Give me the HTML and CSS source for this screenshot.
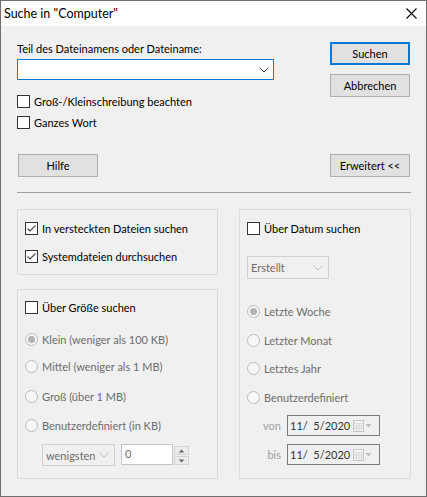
FILE: index.html
```html
<!DOCTYPE html>
<html lang="de">
<head>
<meta charset="utf-8">
<title>Suche in "Computer"</title>
<link rel="stylesheet" href="styles.css">
</head>
<body>
<div class="window">
  <div class="titlebar">
    <span class="title">Suche in &quot;Computer&quot;</span>
    <svg class="close" width="11" height="11" viewBox="0 0 11 11"><path d="M0.5 0.5 L10.5 10.5 M10.5 0.5 L0.5 10.5" stroke="#000" stroke-width="1.1" fill="none"/></svg>
  </div>
  <div class="content">
    <div class="top">
      <div class="top-left">
        <div class="label">Teil des Dateinamens oder Dateiname:</div>
        <div class="combo">
          <svg class="chev" width="10" height="6" viewBox="0 0 10 6"><path d="M0.5 0.5 L5 5 L9.5 0.5" stroke="#3c3c3c" stroke-width="1" fill="none"/></svg>
        </div>
        <div class="row check-row first"><span class="box"></span><span>Groß-/Kleinschreibung beachten</span></div>
        <div class="row check-row second"><span class="box"></span><span>Ganzes Wort</span></div>
      </div>
      <div class="top-right">
        <div class="btn btn-default">Suchen</div>
        <div class="btn btn-cancel">Abbrechen</div>
      </div>
    </div>
    <div class="btn-row">
      <div class="btn btn-help">Hilfe</div>
      <div class="btn">Erweitert &lt;&lt;</div>
    </div>
    <div class="sep"></div>
    <div class="groups">
      <div class="col-left">
        <div class="group g-attr">
          <div class="row"><span class="box checked"><svg width="11" height="11" viewBox="0 0 11 11"><path d="M1.5 5.5 L4 8 L9.5 2.5" stroke="#444" stroke-width="1.1" fill="none"/></svg></span><span>In versteckten Dateien suchen</span></div>
          <div class="row r2"><span class="box checked"><svg width="11" height="11" viewBox="0 0 11 11"><path d="M1.5 5.5 L4 8 L9.5 2.5" stroke="#444" stroke-width="1.1" fill="none"/></svg></span><span>Systemdateien durchsuchen</span></div>
        </div>
        <div class="group g-size">
          <div class="row"><span class="box"></span><span>Über Größe suchen</span></div>
          <div class="row radio-row s1"><span class="radio on"></span><span>Klein (weniger als 100 KB)</span></div>
          <div class="row radio-row s2"><span class="radio"></span><span>Mittel (weniger als 1 MB)</span></div>
          <div class="row radio-row s3"><span class="radio"></span><span>Groß (über 1 MB)</span></div>
          <div class="row radio-row s4"><span class="radio"></span><span>Benutzerdefiniert (in KB)</span></div>
          <div class="size-inputs">
            <div class="dd dd-min"><span>wenigsten</span><svg class="chev" width="10" height="6" viewBox="0 0 10 6"><path d="M0.5 0.5 L5 5 L9.5 0.5" stroke="#c2c2c2" stroke-width="1" fill="none"/></svg></div>
            <div class="num">0</div>
            <div class="spin">
              <div class="spin-btn"><svg width="7" height="4" viewBox="0 0 7 4"><path d="M0.5 3.5 L3.5 0.5 L6.5 3.5 Z" fill="#6a6a6a"/></svg></div>
              <div class="spin-btn"><svg width="7" height="4" viewBox="0 0 7 4"><path d="M0.5 0.5 L3.5 3.5 L6.5 0.5 Z" fill="#6a6a6a"/></svg></div>
            </div>
          </div>
        </div>
      </div>
      <div class="group g-date">
        <div class="row"><span class="box"></span><span>Über Datum suchen</span></div>
        <div class="dd dd-created"><span>Erstellt</span><svg class="chev" width="10" height="6" viewBox="0 0 10 6"><path d="M0.5 0.5 L5 5 L9.5 0.5" stroke="#c2c2c2" stroke-width="1" fill="none"/></svg></div>
        <div class="row radio-row d1"><span class="radio on"></span><span>Letzte Woche</span></div>
        <div class="row radio-row d2"><span class="radio"></span><span>Letzter Monat</span></div>
        <div class="row radio-row d3"><span class="radio"></span><span>Letztes Jahr</span></div>
        <div class="row radio-row d4"><span class="radio"></span><span>Benutzerdefiniert</span></div>
        <div class="date-row von">
          <span class="date-label">von</span>
          <div class="date"><span class="date-text">11/&nbsp; 5/2020</span>
            <svg class="cal" width="19" height="12" viewBox="0 0 19 12"><rect x="0.5" y="0.5" width="10" height="11" fill="#f4f4f4" stroke="#c6c6c6"/><path d="M1 3.5 H10 M1 6 H10 M1 8.5 H10 M3.5 3 V11 M6 3 V11 M8.5 3 V11" stroke="#dadada" stroke-width="1"/><path d="M12.5 4 L18.5 4 L15.5 7.5 Z" fill="#bdbdbd"/></svg>
          </div>
        </div>
        <div class="date-row bis">
          <span class="date-label">bis</span>
          <div class="date"><span class="date-text">11/&nbsp; 5/2020</span>
            <svg class="cal" width="19" height="12" viewBox="0 0 19 12"><rect x="0.5" y="0.5" width="10" height="11" fill="#f4f4f4" stroke="#c6c6c6"/><path d="M1 3.5 H10 M1 6 H10 M1 8.5 H10 M3.5 3 V11 M6 3 V11 M8.5 3 V11" stroke="#dadada" stroke-width="1"/><path d="M12.5 4 L18.5 4 L15.5 7.5 Z" fill="#bdbdbd"/></svg>
          </div>
        </div>
      </div>
    </div>
  </div>
</div>
</body>
</html>
```

FILE: styles.css
```css
* { box-sizing: border-box; }
html, body { margin: 0; padding: 0; }
body {
  font-family: "Lato", "Liberation Sans", sans-serif;
  font-size: 11px;
  color: #000;
  background: #f0f0f0;
}
.window {
  width: 427px;
  height: 497px;
  border: 1px solid #6f6f6f;
  background: #f0f0f0;
  display: flex;
  flex-direction: column;
}
.titlebar {
  height: 25px;
  flex: none;
  background: #fff;
  display: flex;
  align-items: center;
  justify-content: space-between;
  padding: 0 9px 0 3px;
}
.title { font-size: 12.5px; line-height: 15px; }
.close { display: block; }

.content { padding: 0 15px 0 16px; }

.top { display: flex; justify-content: space-between; }
.top-left { width: 257px; }
.top-right { width: 80px; margin-right: 1px; padding-top: 16px; }

.label { margin-top: 15px; height: 15px; line-height: 15px; }
.combo {
  margin-top: 3px;
  height: 21px;
  background: #fff;
  border: 1px solid #0078d7;
  display: flex;
  align-items: center;
  justify-content: flex-end;
  padding-right: 4px;
}
.chev { display: block; }

.row {
  height: 15px;
  line-height: 15px;
  display: flex;
  align-items: center;
  gap: 4px;
  white-space: nowrap;
}
.check-row.first { margin-top: 14px; }
.check-row.second { margin-top: 6px; }

.box {
  width: 13px;
  height: 13px;
  flex: none;
  border: 1px solid #333;
  background: #fff;
  display: flex;
  align-items: center;
  justify-content: center;
}
.box.checked svg { display: block; }

.btn {
  width: 80px;
  height: 23px;
  background: #e1e1e1;
  border: 1px solid #adadad;
  display: flex;
  align-items: center;
  justify-content: center;
  line-height: 15px;
  white-space: nowrap;
}
.btn-default { border: 2px solid #0078d7; }
.btn-cancel { margin-top: 9px; }

.btn-row {
  display: flex;
  justify-content: space-between;
  margin-top: 24px;
  padding-left: 1px;
  padding-right: 1px;
}
.btn-help { width: 80px; }

.sep { margin-top: 15px; height: 1px; background: #a0a0a0; }

.groups {
  margin-top: 16px;
  display: grid;
  grid-template-columns: 201px 172px;
  column-gap: 21px;
}
.col-left { display: flex; flex-direction: column; gap: 14px; }
.group { border: 1px solid #dcdcdc; padding-left: 7px; }
.g-attr { height: 66px; padding-top: 11px; }
.g-attr .r2 { margin-top: 13px; }
.g-size { height: 190px; padding-top: 10px; }
.g-date { height: 270px; padding-top: 11px; }

.radio-row { color: #6d6d6d; }
.radio {
  width: 13px;
  height: 13px;
  flex: none;
  border-radius: 50%;
  border: 1px solid #bcbcbc;
  background: #f7f7f7;
  display: flex;
  align-items: center;
  justify-content: center;
}
.radio.on::after {
  content: "";
  width: 7px;
  height: 7px;
  border-radius: 50%;
  background: #b3b3b3;
}
.s1 { margin-top: 17px; }
.s2 { margin-top: 12px; }
.s3 { margin-top: 15px; }
.s4 { margin-top: 14px; }

.size-inputs {
  margin-top: 11px;
  padding-left: 17px;
  display: flex;
  align-items: flex-start;
}
.dd {
  height: 22px;
  border: 1px solid #d0d0d0;
  background: #f0f0f0;
  color: #6d6d6d;
  display: flex;
  align-items: center;
  justify-content: space-between;
  padding: 0 5px 0 3px;
  white-space: nowrap;
}
.dd-min { width: 73px; }
.num {
  margin-left: 6px;
  width: 52px;
  height: 21px;
  border: 1px solid #c4c4c4;
  background: #fff;
  color: #6d6d6d;
  padding: 2px 0 0 3px;
  line-height: 14px;
}
.spin {
  margin-left: 1px;
  margin-top: 2px;
  display: flex;
  flex-direction: column;
  gap: 1px;
}
.spin-btn {
  width: 15px;
  height: 9px;
  border: 1px solid #d4d4d4;
  background: #ececec;
  display: flex;
  align-items: center;
  justify-content: center;
}
.spin-btn svg { display: block; }

.dd-created { width: 82px; height: 23px; margin-top: 20px; }
.d1 { margin-top: 25px; }
.d2 { margin-top: 14px; }
.d3 { margin-top: 13px; }
.d4 { margin-top: 14px; }

.date-row { display: flex; align-items: center; }
.date-row.von { margin-top: 10px; }
.date-row.bis { margin-top: 8px; }
.date-label {
  width: 34px;
  text-align: right;
  margin-right: 6px;
  color: #a0a0a0;
}
.date {
  width: 93px;
  height: 21px;
  border: 1px solid #7a7a7a;
  background: #f0f0f0;
  display: flex;
  align-items: center;
  justify-content: space-between;
  padding: 0 7px 0 2px;
  color: #333;
  white-space: nowrap;
}
.date-text { white-space: nowrap; }
.cal { display: block; flex: none; }
```
